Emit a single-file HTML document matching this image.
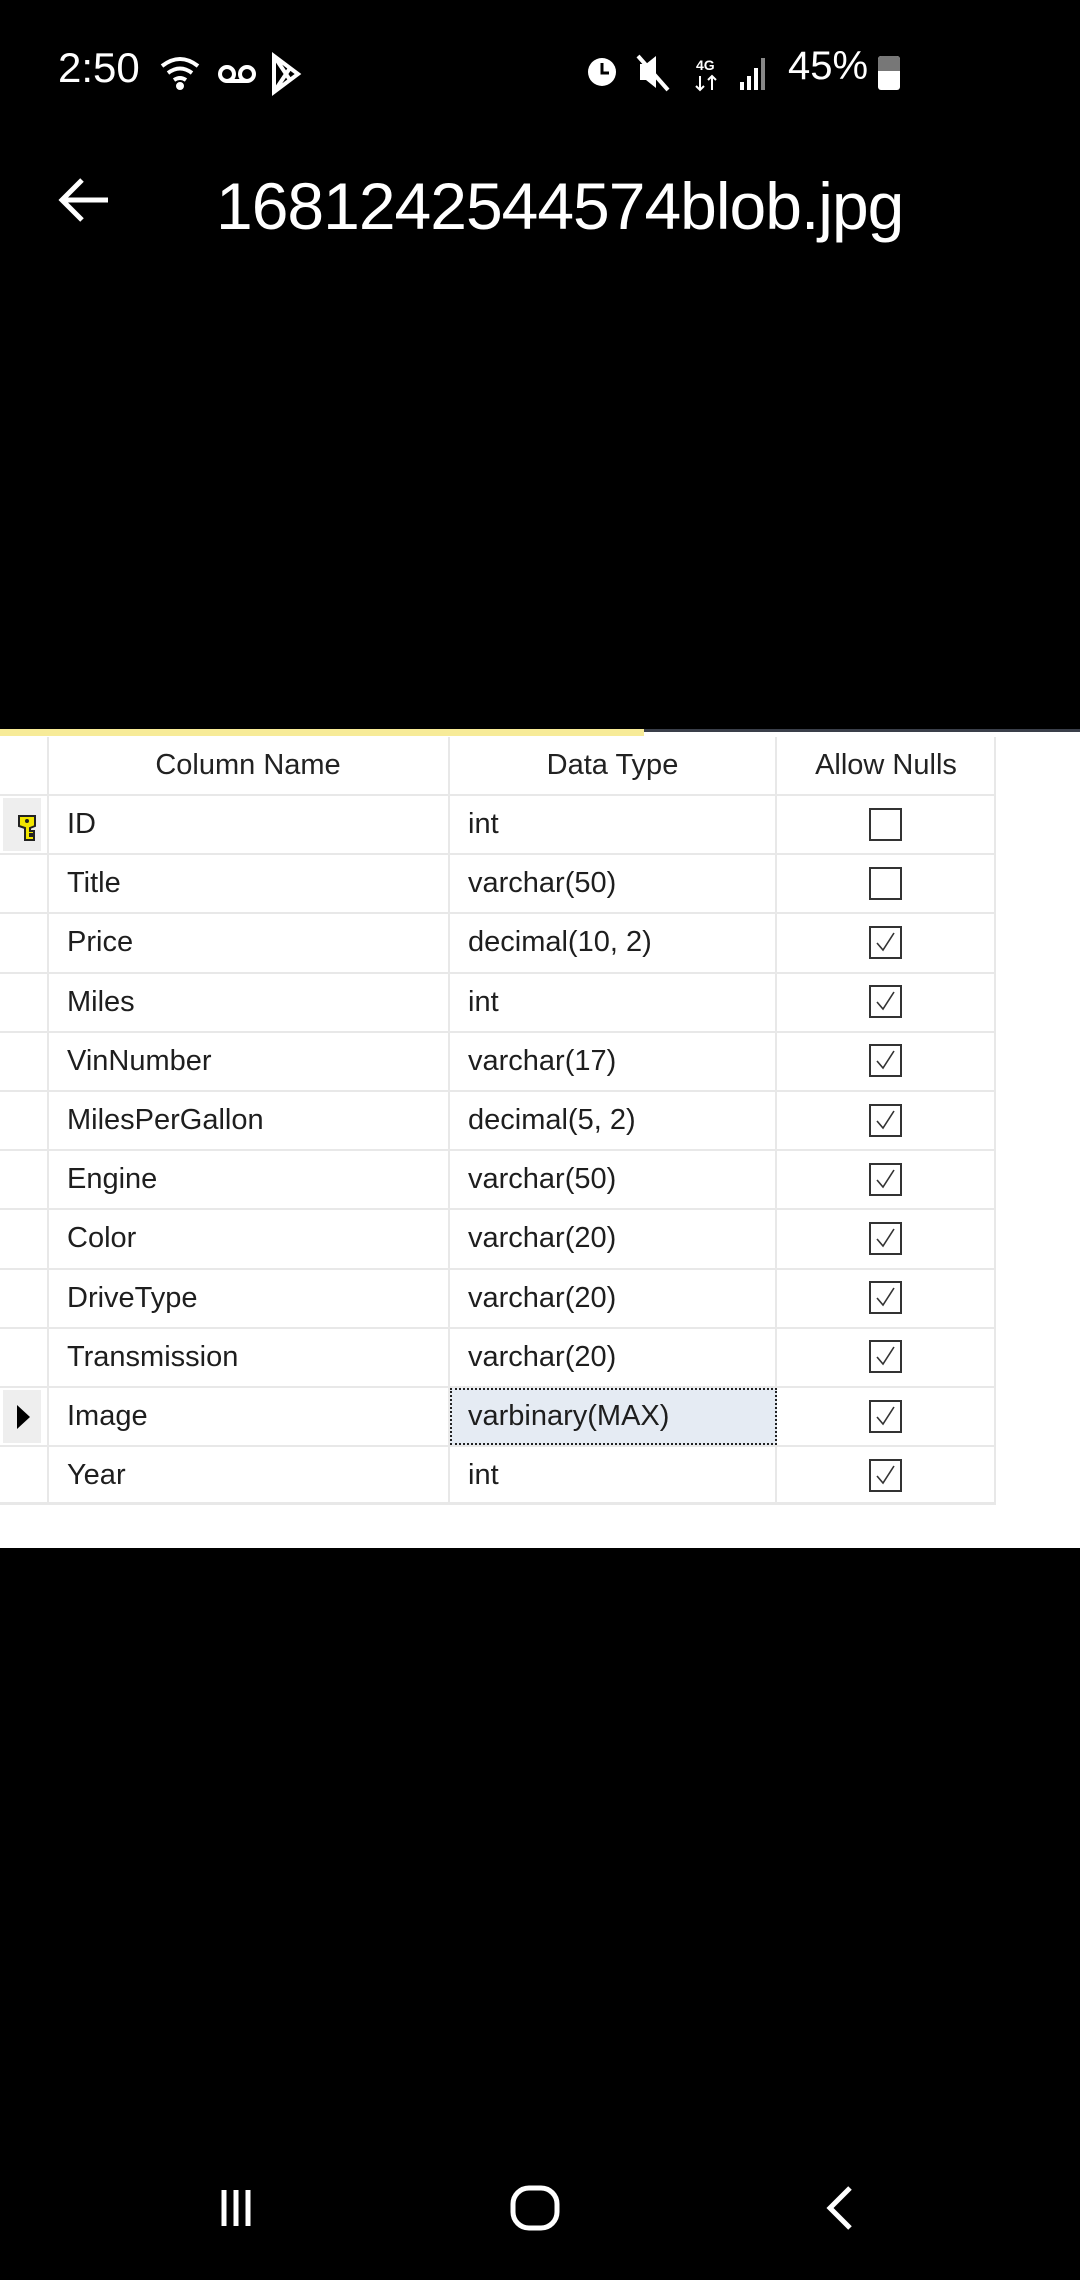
<!DOCTYPE html>
<html><head><meta charset="utf-8"><style>
*{margin:0;padding:0;box-sizing:border-box}
body{width:1080px;height:2280px;background:#000;position:relative;overflow:hidden;font-family:"Liberation Sans",sans-serif}
.abs{position:absolute}
.w{color:#fff}
.cell{position:absolute;font-size:29px;color:#1e1e1e;line-height:59px;white-space:nowrap}
.hl{position:absolute;background:#e8e8e8}
</style></head><body>
<div class="abs w" style="left:58px;top:44px;font-size:42px;">2:50</div>
<svg class="abs" style="left:158px;top:52px" width="160" height="44" viewBox="0 0 160 44" fill="none" stroke="#fff" stroke-width="4">
<path d="M4 14 Q22 0 40 14"/><path d="M10 21 Q22 12 34 21"/><path d="M16 28 Q22 24 28 28"/><circle cx="22" cy="34" r="2" fill="#fff"/>
<circle cx="69" cy="22" r="7"/><circle cx="89" cy="22" r="7"/><path d="M69 29 H89"/>
<path d="M116 4 L116 40 L140 22 Z M116 4 L132 28 M116 40 L132 16"/>
</svg>
<svg class="abs" style="left:584px;top:50px" width="320" height="44" viewBox="0 0 320 44">
<circle cx="18" cy="22" r="14" fill="#fff"/><path d="M18 13 V23 H25" stroke="#000" stroke-width="3" fill="none"/>
<path d="M56 14 H62 L72 6 V38 L62 30 H56 Z" fill="#fff"/><path d="M54 6 L84 40" stroke="#fff" stroke-width="4"/>
<text x="112" y="20" fill="#fff" font-size="14" font-family="Liberation Sans" font-weight="bold">4G</text>
<path d="M116 26 V40 M112 36 L116 40 L120 36 M128 40 V26 M124 30 L128 26 L132 30" stroke="#fff" stroke-width="2" fill="none"/>
<rect x="156" y="32" width="4" height="8" fill="#fff"/><rect x="163" y="26" width="4" height="14" fill="#fff"/><rect x="170" y="18" width="4" height="22" fill="#fff"/><rect x="177" y="8" width="4" height="32" fill="#888"/>
</svg>
<div class="abs w" style="left:788px;top:44px;font-size:40px;">45%</div>
<div class="abs" style="left:878px;top:56px;width:22px;height:34px;background:#fff;border-radius:3px"></div>
<div class="abs" style="left:878px;top:56px;width:22px;height:15px;background:#777;border-radius:3px 3px 0 0"></div>
<svg class="abs" style="left:56px;top:176px" width="56" height="48" viewBox="0 0 56 48" fill="none" stroke="#fff" stroke-width="5"><path d="M52 24 H6 M26 4 L6 24 L26 44"/></svg>
<div class="abs w" style="left:216px;top:168px;font-size:66px;letter-spacing:-1px;">1681242544574blob.jpg</div>

<div class="abs" style="left:0;top:729px;width:644px;height:7px;background:#f7eb98"></div>
<div class="abs" style="left:644px;top:729px;width:436px;height:3px;background:#3a3f4a"></div>
<div class="abs" style="left:644px;top:732px;width:436px;height:4px;background:#fff"></div>
<div class="abs" style="left:0;top:736px;width:1080px;height:812px;background:#fff"></div>
<div class="abs" style="left:0;top:737px;width:996px;height:767px">
<div class="hl" style="left:47px;top:0;width:2px;height:767px"></div>
<div class="hl" style="left:448px;top:0;width:2px;height:767px"></div>
<div class="hl" style="left:775px;top:0;width:2px;height:767px"></div>
<div class="hl" style="left:994px;top:0;width:2px;height:767px"></div>
</div>
<div class="abs" style="left:0;top:737px;width:996px;height:57px;">
<div class="cell" style="left:48px;width:400px;text-align:center;line-height:57px;color:#222">Column Name</div>
<div class="cell" style="left:450px;width:325px;text-align:center;line-height:57px;color:#222">Data Type</div>
<div class="cell" style="left:777px;width:218px;text-align:center;line-height:57px;color:#222">Allow Nulls</div>
</div>
<div class="abs" style="left:0;top:794px;width:996px;height:711px">
<div class="hl" style="left:0;top:0;width:996px;height:2px"></div>
<div class="hl" style="left:0;top:59px;width:996px;height:2px"></div>
<div class="hl" style="left:0;top:118px;width:996px;height:2px"></div>
<div class="hl" style="left:0;top:178px;width:996px;height:2px"></div>
<div class="hl" style="left:0;top:237px;width:996px;height:2px"></div>
<div class="hl" style="left:0;top:296px;width:996px;height:2px"></div>
<div class="hl" style="left:0;top:355px;width:996px;height:2px"></div>
<div class="hl" style="left:0;top:414px;width:996px;height:2px"></div>
<div class="hl" style="left:0;top:474px;width:996px;height:2px"></div>
<div class="hl" style="left:0;top:533px;width:996px;height:2px"></div>
<div class="hl" style="left:0;top:592px;width:996px;height:2px"></div>
<div class="hl" style="left:0;top:651px;width:996px;height:2px"></div>
<div class="hl" style="left:0;top:708px;width:996px;height:3px"></div>
<div class="abs" style="left:3px;top:4px;width:38px;height:53px;background:#eeeeee"></div>
<svg class="abs" style="left:16px;top:20px" width="22" height="28" viewBox="0 0 22 28"><path d="M3 2 H19 V12 L14 14 V17 H18 V20 H14 V22 H18 V26 H9 V14 L3 12 Z" fill="#f2e600" stroke="#222" stroke-width="2"/><circle cx="11" cy="7" r="2" fill="#222"/></svg>
<div class="abs" style="left:3px;top:596px;width:38px;height:53px;background:#eeeeee"></div>
<svg class="abs" style="left:14px;top:609px" width="18" height="28" viewBox="0 0 18 28"><path d="M3 2 L16 14 L3 26 Z" fill="#000"/></svg>
<div class="abs" style="left:450px;top:594px;width:327px;height:57px;background:#e5ebf3;border:2px dotted #222"></div>
</div>
<div class="abs" style="left:0;top:795px">
<div class="cell" style="left:67px;top:0">ID</div><div class="cell" style="left:468px;top:0">int</div>
<div class="cell" style="left:67px;top:59px">Title</div><div class="cell" style="left:468px;top:59px">varchar(50)</div>
<div class="cell" style="left:67px;top:118px">Price</div><div class="cell" style="left:468px;top:118px">decimal(10, 2)</div>
<div class="cell" style="left:67px;top:178px">Miles</div><div class="cell" style="left:468px;top:178px">int</div>
<div class="cell" style="left:67px;top:237px">VinNumber</div><div class="cell" style="left:468px;top:237px">varchar(17)</div>
<div class="cell" style="left:67px;top:296px">MilesPerGallon</div><div class="cell" style="left:468px;top:296px">decimal(5, 2)</div>
<div class="cell" style="left:67px;top:355px">Engine</div><div class="cell" style="left:468px;top:355px">varchar(50)</div>
<div class="cell" style="left:67px;top:414px">Color</div><div class="cell" style="left:468px;top:414px">varchar(20)</div>
<div class="cell" style="left:67px;top:474px">DriveType</div><div class="cell" style="left:468px;top:474px">varchar(20)</div>
<div class="cell" style="left:67px;top:533px">Transmission</div><div class="cell" style="left:468px;top:533px">varchar(20)</div>
<div class="cell" style="left:67px;top:592px">Image</div><div class="cell" style="left:468px;top:592px">varbinary(MAX)</div>
<div class="cell" style="left:67px;top:651px">Year</div><div class="cell" style="left:468px;top:651px">int</div>
</div>
<svg class="abs" style="left:869px;top:808px" width="34" height="700" viewBox="0 0 34 700" fill="#fff" stroke="#333" stroke-width="2">
<rect x="1" y="1" width="31" height="31"/>
<rect x="1" y="60" width="31" height="31"/>
<g id="c"><rect x="1" y="119" width="31" height="31"/><path d="M8 135 L14 142 L25 125" fill="none" stroke-width="1.6"/></g>
<use href="#c" y="59"/><use href="#c" y="118"/><use href="#c" y="178"/><use href="#c" y="237"/><use href="#c" y="296"/><use href="#c" y="355"/><use href="#c" y="414"/><use href="#c" y="474"/><use href="#c" y="533"/>
</svg>

<svg class="abs" style="left:210px;top:2180px" width="660" height="56" viewBox="0 0 660 56" fill="none" stroke="#fff" stroke-width="5">
<path d="M14 10 V46 M26 10 V46 M38 10 V46"/>
<rect x="303" y="8" width="44" height="40" rx="16"/>
<path d="M640 8 L620 28 L640 48"/>
</svg>
</body></html>
